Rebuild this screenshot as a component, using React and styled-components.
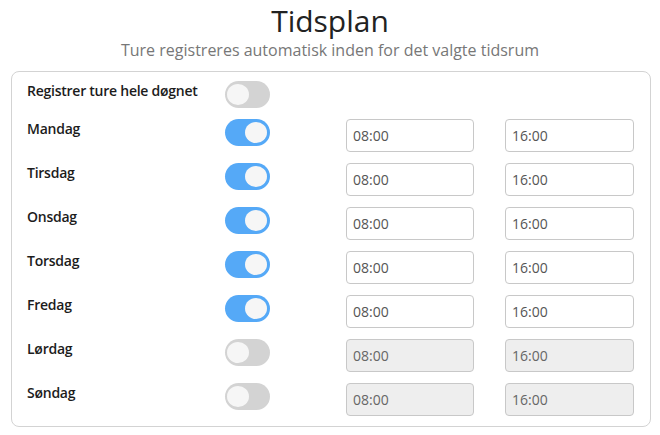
import React, { useState } from "react";
import styled, { createGlobalStyle } from "styled-components";

const GlobalStyle = createGlobalStyle`
  html, body {
    margin: 0;
    padding: 0;
    background: #ffffff;
  }
  body {
    font-family: "Open Sans", "Noto Sans", sans-serif;
  }
  * {
    box-sizing: border-box;
  }
`;

const days = [
  { name: "Mandag", on: true },
  { name: "Tirsdag", on: true },
  { name: "Onsdag", on: true },
  { name: "Torsdag", on: true },
  { name: "Fredag", on: true },
  { name: "Lørdag", on: false },
  { name: "Søndag", on: false },
];

const Switch = ({ on, onToggle }) => (
  <Track $on={on} onClick={onToggle}>
    <Knob $on={on} />
  </Track>
);

const App = () => {
  const [allDay, setAllDay] = useState(false);
  const [week, setWeek] = useState(days);

  const toggleDay = (i) => {
    setWeek(week.map((d, j) => (j === i ? { ...d, on: !d.on } : d)));
  };

  return (
    <>
      <GlobalStyle />
      <Page>
        <Title>Tidsplan</Title>
        <Subtitle>Ture registreres automatisk inden for det valgte tidsrum</Subtitle>
        <Card>
          <Grid>
            <Label>Registrer ture hele døgnet</Label>
            <Switch on={allDay} onToggle={() => setAllDay(!allDay)} />
            <span />
            <span />
            {week.map((d, i) => (
              <React.Fragment key={d.name}>
                <Label>{d.name}</Label>
                <Switch on={d.on} onToggle={() => toggleDay(i)} />
                <TimeInput defaultValue="08:00" disabled={!d.on} />
                <TimeInput $wide defaultValue="16:00" disabled={!d.on} />
              </React.Fragment>
            ))}
          </Grid>
        </Card>
      </Page>
    </>
  );
};

export default App;

const Page = styled.div`
  width: 660px;
  padding-top: 3px;
  display: flex;
  flex-direction: column;
  align-items: center;
`;

const Title = styled.h1`
  margin: 0;
  font-size: 30px;
  line-height: 36px;
  font-weight: 400;
  color: #222;
`;

const Subtitle = styled.div`
  font-size: 16px;
  line-height: 22px;
  color: #777;
`;

const Card = styled.div`
  align-self: flex-start;
  margin: 10px 0 0 11px;
  width: 640px;
  border: 1px solid #d3d3d3;
  border-radius: 8px;
  padding: 9px 15px 10px 15px;
`;

const Grid = styled.div`
  display: grid;
  grid-template-columns: 198px 121px 159px 1fr;
  row-gap: 11px;
  align-items: start;
`;

const Label = styled.div`
  font-size: 14px;
  line-height: 20px;
  font-weight: 560;
  letter-spacing: -0.25px;
  color: #1c1c1c;
`;

const Track = styled.div`
  position: relative;
  width: 45px;
  height: 27px;
  border-radius: 14px;
  background: ${(p) => (p.$on ? "#55a9f7" : "#d3d3d3")};
  cursor: pointer;
`;

const Knob = styled.div`
  position: absolute;
  top: 3px;
  left: ${(p) => (p.$on ? "20px" : "2px")};
  width: 22px;
  height: 21px;
  border-radius: 50%;
  background: #f6f6f6;
`;

const TimeInput = styled.input`
  width: ${(p) => (p.$wide ? "129px" : "128px")};
  height: 33px;
  padding: 0 6px;
  border: 1px solid #c8c8c8;
  border-radius: 4px;
  background: ${(p) => (p.disabled ? "#eeeeee" : "#ffffff")};
  font-family: "Open Sans", sans-serif;
  font-size: 14px;
  color: #555;
  outline: none;

  &:disabled {
    color: #666;
  }
`;
